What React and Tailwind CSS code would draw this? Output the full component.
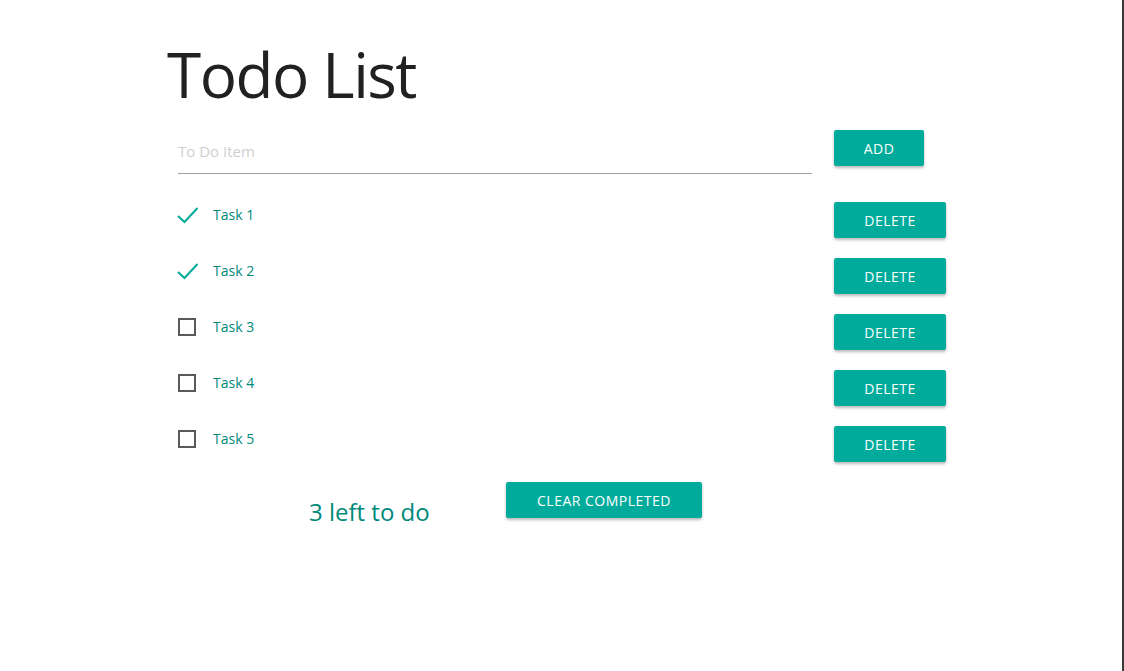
import React from "react";

const tasks = [
  { name: "Task 1", done: true },
  { name: "Task 2", done: true },
  { name: "Task 3", done: false },
  { name: "Task 4", done: false },
  { name: "Task 5", done: false },
];

const btn =
  "h-[36px] rounded-[2px] bg-[#00ab9b] text-white text-[14px] tracking-[0.5px] uppercase shadow-[0_2px_3px_rgba(0,0,0,0.28)] flex items-center justify-center";

function Check() {
  return (
    <svg width="24" height="20" viewBox="0 0 24 20" className="block">
      <path d="M2 11 L8.5 17 L21.5 3" fill="none" stroke="#00ab9b" strokeWidth="2" />
    </svg>
  );
}

export default function App() {
  return (
    <div
      className="w-full h-[671px] bg-white flex border-r-2 border-[#3a3a3a]"
      style={{ fontFamily: '"Open Sans", "Noto Sans", sans-serif' }}
    >
      <div className="flex flex-col pl-[167px] pt-[32px]">
        <h1 className="text-[62px] leading-[84px] text-[#212121] font-normal tracking-[-1.5px]">
          Todo List
        </h1>
        <div className="flex items-start pl-[11px] mt-[14px]">
          <div className="w-[634px] h-[44px] border-b border-[#9e9e9e] flex items-center">
            <span className="text-[15px] text-[#cfcfcf]">To Do Item</span>
          </div>
          <button className={btn + " w-[90px] ml-[22px]"}>Add</button>
        </div>
        <div className="flex flex-col pl-[9px] mt-[18px]">
          {tasks.map((t) => (
            <div key={t.name} className="flex items-center h-[56px]">
              <div className="w-[658px] flex items-center mb-[11px]">
                <div className="w-[37px] flex items-center">
                  {t.done ? (
                    <Check />
                  ) : (
                    <div className="ml-[2px] w-[18px] h-[18px] border-2 border-[#5a5a5a]" />
                  )}
                </div>
                <span className="text-[14px] text-[#00897b] font-medium">{t.name}</span>
              </div>
              <button className={btn + " w-[112px]"}>Delete</button>
            </div>
          ))}
        </div>
        <div className="flex items-start mt-[10px] pl-[142px]">
          <span className="text-[24px] text-[#00897b] mt-[12px] w-[197px]">3 left to do</span>
          <button className={btn + " w-[196px]"}>Clear Completed</button>
        </div>
      </div>
    </div>
  );
}
